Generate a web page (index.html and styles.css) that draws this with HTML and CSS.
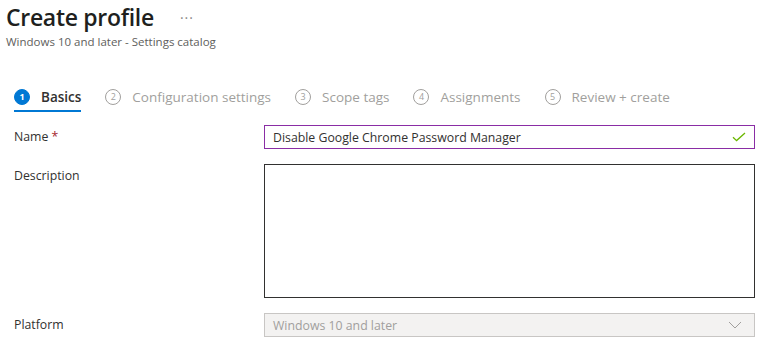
FILE: index.html
```html
<!DOCTYPE html>
<html lang="en">
<head>
    <meta charset="UTF-8">
    <meta name="viewport" content="width=device-width, initial-scale=1.0">
    <title>Create profile</title>
    <link rel="stylesheet" href="styles.css">
</head>
<body>
    <header class="page-head">
        <div class="title-row">
            <h1 class="title">Create profile</h1>
            <span class="more">&middot;&middot;&middot;</span>
        </div>
        <p class="subtitle">Windows 10 and later - Settings catalog</p>
    </header>

    <nav class="steps">
        <div class="step active"><span class="num">1</span>Basics</div>
        <div class="step"><span class="num">2</span>Configuration settings</div>
        <div class="step"><span class="num">3</span>Scope tags</div>
        <div class="step"><span class="num">4</span>Assignments</div>
        <div class="step"><span class="num">5</span>Review + create</div>
    </nav>

    <form class="form">
        <label class="label" for="name">Name <span class="req">*</span></label>
        <div class="field valid">
            <input id="name" class="input" type="text" value="Disable Google Chrome Password Manager">
            <svg class="check" width="14" height="10" viewBox="0 0 14 10"><path d="M1 5.2 L4.6 8.6 L13 1" fill="none" stroke="#6bb700" stroke-width="1.3"/></svg>
        </div>

        <label class="label" for="desc">Description</label>
        <textarea id="desc" class="textarea"></textarea>

        <label class="label">Platform</label>
        <div class="select disabled">
            <span>Windows 10 and later</span>
            <svg width="14" height="8" viewBox="0 0 14 8"><path d="M1 1 L7 7 L13 1" fill="none" stroke="#a19f9d" stroke-width="1"/></svg>
        </div>
    </form>
</body>
</html>
```

FILE: styles.css
```css
html, body {
    margin: 0;
    background: #ffffff;
    font-family: "Open Sans", "Noto Sans", sans-serif;
    color: #323130;
}

.page-head {
    padding: 0 0 0 6px;
}
.title-row {
    display: flex;
    align-items: center;
    gap: 26px;
    height: 34px;
}
.title {
    margin: 0;
    font-size: 23px;
    font-weight: 600;
    color: #201f1e;
    letter-spacing: -0.3px;
}
.more {
    color: #8a8886;
    font-size: 14px;
    letter-spacing: 1px;
}
.subtitle {
    margin: 0;
    font-size: 11.5px;
    color: #605e5c;
    line-height: 16px;
}

.steps {
    display: flex;
    gap: 24px;
    padding: 29px 0 0 14px;
}
.step {
    display: flex;
    align-items: center;
    gap: 11px;
    font-size: 13.5px;
    line-height: 20px;
    padding: 8px 0 3px;
    color: #a19f9d;
    border-bottom: 2px solid transparent;
}
.step.active {
    color: #323130;
    font-weight: 600;
    border-bottom-color: #0078d4;
}
.num {
    display: flex;
    align-items: center;
    justify-content: center;
    width: 14px;
    height: 14px;
    border: 1px solid #a19f9d;
    border-radius: 50%;
    font-size: 9px;
    line-height: 14px;
    font-weight: 400;
}
.step.active .num {
    background: #0078d4;
    border-color: #0078d4;
    color: #ffffff;
    font-weight: 700;
}

.form {
    display: grid;
    grid-template-columns: 250px 491px;
    row-gap: 15px;
    padding: 13px 0 0 14px;
}
.label {
    font-size: 12.3px;
    line-height: 24px;
    color: #323130;
}
.req {
    color: #a4262c;
}
.field {
    display: flex;
    align-items: center;
    height: 22px;
    border: 1px solid #8a2da5;
    padding: 0 8px;
}
.input {
    flex: 1;
    border: none;
    outline: none;
    padding: 0;
    font: inherit;
    font-size: 12.3px;
    color: #323130;
}
.check {
    display: block;
}
.textarea {
    box-sizing: border-box;
    height: 134px;
    border: 1px solid #323130;
    resize: none;
    font: inherit;
}
.select {
    display: flex;
    align-items: center;
    justify-content: space-between;
    height: 22px;
    padding: 0 12px 0 8px;
    background: #f3f2f1;
    border: 1px solid #c8c6c4;
    font-size: 12.3px;
    color: #a19f9d;
}
```
